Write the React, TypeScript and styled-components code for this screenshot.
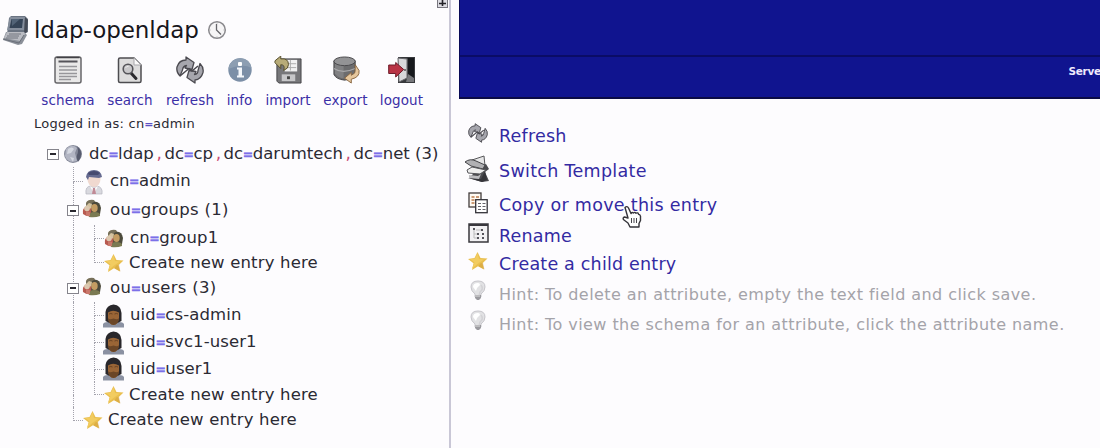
import React from "react";
import styled, { createGlobalStyle } from "styled-components";

const GlobalStyle = createGlobalStyle`
  body { margin: 0; background: #fdfcfe; }
  * { box-sizing: border-box; }
`;

const Page = styled.div`
  display: flex;
  width: 1100px;
  height: 448px;
  overflow: hidden;
  background: #fdfcfe;
  font-family: "DejaVu Sans", Verdana, sans-serif;
  color: #2b2a33;
  white-space: nowrap;
`;

const Sidebar = styled.aside`
  position: relative;
  width: 451px;
  height: 448px;
  flex: none;
  border-right: 2px solid #c9c7d6;
`;

const ResizeBox = styled.div`
  position: absolute;
  top: -7px;
  right: 1px;
  width: 11px;
  height: 12px;
`;

const ServerTitle = styled.header`
  display: flex;
  align-items: center;
  height: 32px;
  margin-top: 14px;
  padding-left: 2px;
`;

const ServerName = styled.h1`
  margin: 0 0 0 4px;
  font-size: 23px;
  line-height: 32px;
  font-weight: 400;
  letter-spacing: -0.05px;
  color: #17161c;
  width: 173px;
`;

const Toolbar = styled.nav`
  display: flex;
  padding-top: 10px;
  padding-left: 38px;
`;

const Tool = styled.a<{ $w: number }>`
  display: flex;
  flex-direction: column;
  align-items: center;
  width: ${(p) => p.$w}px;
  font-size: 13.5px;
  line-height: 18px;
  letter-spacing: 0.1px;
  color: #3b2fa6;
  svg { margin-bottom: 7px; }
`;

const LoggedIn = styled.p`
  margin: 6px 0 0 34px;
  font-size: 13px;
  line-height: 18px;
  letter-spacing: 0.25px;
`;

const Tree = styled.div`
  margin-top: 7px;
  padding-left: 47px;
`;

const TreeRow = styled.div<{ $h: number }>`
  display: flex;
  align-items: center;
  height: ${(p) => p.$h}px;
`;

const Indent = styled.div`
  width: 26px;
  flex: none;
`;

const Guide = styled.div`
  display: flex;
  flex-direction: column;
  align-self: stretch;
  width: 21px;
  flex: none;
`;

const GuideHalf = styled.div<{ $line: boolean; $branch?: boolean }>`
  flex: 1;
  width: 10px;
  border-left: 1px dotted ${(p) => (p.$line ? "#a3a2ac" : "transparent")};
  border-bottom: ${(p) => (p.$branch ? "1px dotted #a3a2ac" : "0")};
`;

const Toggle = styled.div<{ $ml?: number }>`
  display: flex;
  align-items: center;
  justify-content: center;
  width: 12px;
  height: 11px;
  margin-left: ${(p) => p.$ml ?? 0}px;
  flex: none;
  background: #fff;
  border: 1px solid #85848c;
  &::after {
    content: "";
    width: 6px;
    height: 2px;
    background: #2a2930;
  }
`;

const IconSlot = styled.span<{ $w: number; $ml?: number; $up?: number }>`
  display: flex;
  justify-content: center;
  width: ${(p) => p.$w}px;
  margin-left: ${(p) => p.$ml ?? 0}px;
  margin-bottom: ${(p) => p.$up ?? 0}px;
  flex: none;
`;

const EntryName = styled.span<{ $ml?: number; $ls?: number }>`
  margin-left: ${(p) => p.$ml ?? 0}px;
  font-size: 16.5px;
  line-height: 20px;
  letter-spacing: ${(p) => p.$ls ?? 0.1}px;
`;

const EqualSign = styled.b<{ $small?: boolean }>`
  display: inline-flex;
  justify-content: center;
  width: ${(p) => (p.$small ? 8.5 : 9.5)}px;
  font-size: ${(p) => (p.$small ? 11 : 13)}px;
  letter-spacing: 0;
  color: ${(p) => (p.$small ? "#5d50c4" : "#7c70e8")};
  text-shadow: 0 -1px 0 ${(p) => (p.$small ? "transparent" : "rgba(140, 130, 236, 0.75)")};
`;

const CommaSign = styled.span`
  display: inline-flex;
  justify-content: center;
  width: 10.5px;
  font-size: 17px;
  letter-spacing: 0;
  color: #c94a74;
`;

const Main = styled.main`
  flex: 1;
  min-width: 0;
  padding-left: 8px;
`;

const Banner = styled.div`
  height: 99px;
  overflow: hidden;
  background: #10148f;
  border-left: 1px solid #090b57;
  border-bottom: 2px solid #0b0b45;
`;

const BannerTitle = styled.div`
  height: 57px;
  border-bottom: 2px solid #0a0c66;
`;

const BannerInfo = styled.div`
  padding: 5px 0 0 608.5px;
  font-size: 10.5px;
  line-height: 18px;
  font-weight: 700;
  letter-spacing: -0.3px;
  color: #eeeafc;
`;

const Actions = styled.div`
  padding-top: 19px;
  padding-left: 2px;
`;

const Action = styled.div<{ $h: number; $ls?: number; $hint?: boolean }>`
  position: relative;
  display: flex;
  align-items: center;
  height: ${(p) => p.$h}px;
  font-size: ${(p) => (p.$hint ? 16 : 17.5)}px;
  letter-spacing: ${(p) => p.$ls ?? (p.$hint ? 0.44 : 0.3)}px;
  color: ${(p) => (p.$hint ? "#a4a3a9" : "#332aa2")};
`;

const ActionIcon = styled.span<{ $up?: number }>`
  display: flex;
  justify-content: center;
  width: 34px;
  margin-right: 4px;
  margin-bottom: ${(p) => p.$up ?? 0}px;
  flex: none;
`;

const Pointer = styled.span`
  position: absolute;
  left: 161px;
  top: 17px;
  z-index: 1;
`;

const ComputerIcon = () => (
  <svg width="28" height="31" viewBox="0 0 28 31">
    <path d="M7 3 9 1h14l3 3v13l-4 2H5z" fill="#6b7482" />
    <path d="M8 2h15l-1 13H5z" fill="#858e9c" />
    <path d="M9.500 4h11.500l-1 9H7.500z" fill="#354457" />
    <path d="M10 4h8l-8 7z" fill="#526377" />
    <path d="M23 2l3 3-1 12-3 2z" fill="#444a55" />
    <path d="M4 17h18l3 3-5 9-4 1L1 25z" fill="#8b9099" />
    <path d="M5 17h17l1 2-5 7L2 23z" fill="#b9bbc2" />
    <path d="M7 19h12M5 21h12M4 23h12" stroke="#70757f" />
    <path d="M1 24l16 4 5-8" fill="none" stroke="#6a6f79" />
  </svg>
);

const ClockIcon = () => (
  <svg width="20" height="20" viewBox="0 0 20 20">
    <circle cx="10" cy="10" r="8.300" fill="#f6f5f6" stroke="#8b8a8e" strokeWidth="1.500" />
    <path d="M9.500 4v6l4.500 4.500" fill="none" stroke="#66656a" strokeWidth="1.300" />
    <path d="M10 2.500v1M10 16.500v1M2.500 10h1M16.500 10h1" stroke="#aaa" />
  </svg>
);

const SchemaIcon = () => (
  <svg width="28" height="28" viewBox="0 0 28 28">
    <rect x="1" y="1" width="26" height="26" rx="2" fill="#e9e8e8" stroke="#67666a" strokeWidth="1.500" />
    <path d="M2.500 1.500h23" stroke="#414045" strokeWidth="1.500" />
    <path d="M4.500 5.500h19" stroke="#55545a" strokeWidth="2" />
    <path d="M5 10.500h18M5 14h18M5 17.500h18M5 20.500h18M5 23.500h12" stroke="#97969a" strokeWidth="1.300" />
  </svg>
);

const SearchIcon = () => (
  <svg width="28" height="28" viewBox="0 0 28 28">
    <path d="M4 2h14l7 7v16q0 1.500-1.500 1.500H4q-1.500 0-1.500-1.500V3.500Q2.500 2 4 2z" fill="#dddcdc" stroke="#4d4c50" strokeWidth="1.500" />
    <path d="M18 2v7h7" fill="#fbfafa" stroke="#a8a7ab" />
    <path d="m15 17 5 5.500" stroke="#2b2a2e" strokeWidth="3" strokeLinecap="round" />
    <circle cx="12" cy="13" r="4.800" fill="#c9c8ca" stroke="#555459" strokeWidth="1.600" />
    <path d="M9.500 12q1-2 3-1.500" fill="none" stroke="#eee" />
  </svg>
);

const RefreshIcon = ({ size = 28 }: { size?: number }) => (
  <svg width={size} height={size} viewBox="0 0 28 28">
    <g fill="#a6a6ad" stroke="#4b4a50" strokeWidth="1.300" strokeLinejoin="round">
      <path d="M4 20Q0 16 1 11 3 4 10 4V1l8 5.500-2 7-7-1.500 1.500-2.500Q7 10 6.500 14z" />
      <path d="M24 7.500q4 4 3 9-2 7-8 7.500v3l-8-5.500 2-7 7 1-1.500 3q3.500-.5 3.500-4z" />
      <path d="m4 20 9-7.500 3 2.500 6-5" fill="none" strokeWidth="1.600" />
    </g>
  </svg>
);

const InfoIcon = () => (
  <svg width="28" height="28" viewBox="0 0 28 28">
    <circle cx="14" cy="14" r="11.700" fill="#7c8fa7" />
    <path d="M2.500 13q1-10 12-11 10 1 11 10-8-5-23 1z" fill="#8d9eb2" />
    <rect x="12" y="6" width="4" height="4" rx="1" fill="#fff" />
    <path d="M11 11.500h5v8h2v2h-7v-2h1.500v-6H11z" fill="#f4f7fb" />
  </svg>
);

const ImportIcon = () => (
  <svg width="28" height="28" viewBox="0 0 29 29">
    <path d="M4 3h24v25H5l-2-2V4z" fill="#77777a" stroke="#454448" />
    <rect x="11" y="4" width="13" height="12" fill="#f1f1f1" />
    <path d="M12 8h11M12 12h11M17 4v11" stroke="#aaa" />
    <rect x="8" y="19" width="14" height="7" fill="#c7c7c9" />
    <path d="M13.500 21h3v3h-3z" fill="#444" />
    <path d="M1 5 7 0v3q8-1 8 6 0 4-5 6 2-6-3-6v4L1 7z" fill="#b7ab78" stroke="#57502f" />
  </svg>
);

const ExportIcon = () => (
  <svg width="28" height="28" viewBox="0 0 29 29">
    <path d="M2 5v14q2 5 11 6 9-1 11-6V5z" fill="#6c6c6e" stroke="#434245" />
    <path d="M3 8v10q4 5 9 5V9z" fill="#808082" />
    <ellipse cx="13" cy="5.500" rx="11" ry="4.500" fill="#939395" stroke="#4a494c" />
    <path d="M2 13q9 6 22 0" fill="none" stroke="#a9a9ab" strokeWidth="1.300" />
    <path d="m24 9 4 6q1 7-8 9v4l-7-5 7-6v3q5-2 4-6z" fill="#e6c79d" stroke="#8a6843" />
  </svg>
);

const LogoutIcon = () => (
  <svg width="28" height="28" viewBox="0 0 28 28">
    <path d="M10 1h17v26H10z" fill="#37383c" />
    <path d="M20 2h6v24h-6z" fill="#17191d" />
    <path d="m20 18 6 4v4h-8z" fill="#77787c" />
    <path d="m10 2 9 1v19l-8 4z" fill="#d8d8db" stroke="#67676b" />
    <path d="M16 14h2" stroke="#555" strokeWidth="1.500" />
    <path d="M.700 9h7V6.500l8 7-8 7.500v-3.500h-7z" fill="#b93345" stroke="#6d1c29" />
  </svg>
);

const GlobeIcon = () => (
  <svg width="20" height="20" viewBox="0 0 20 20">
    <circle cx="10" cy="10" r="9" fill="#858999" />
    <path d="M3 5q6-6 11-1l-2 5 2 8Q5 20 2 12z" fill="#b2b5c3" />
    <path d="M5 5q4-3 6 0l-3 4-4 1zM7 13l4 1-1 4z" fill="#d5d8e1" />
    <path d="M14 2q8 7 1 16-2-4-1-7 2-4 0-9z" fill="#565a6d" />
  </svg>
);

const AdminIcon = () => (
  <svg width="20" height="26" viewBox="0 0 20 26">
    <path d="M2 25q-1-8 5-8h6q6 1 5 8z" fill="#d9d9df" stroke="#b5b4bf" strokeWidth=".7" />
    <ellipse cx="10" cy="10" rx="6.500" ry="8" fill="#f0d9d0" />
    <path d="M2 8Q3 1 10 1t8 7l-3 1-10-1-1 3z" fill="#656a90" />
    <path d="M4 4q6-4 12 0l-2 2H5z" fill="#464a70" />
    <path d="m6 17 4 3 4-3-4 8z" fill="#fff" />
    <path d="M9 19h2l1 6H8z" fill="#c08a96" />
  </svg>
);

const GroupIcon = () => (
  <svg width="20" height="19" viewBox="0 0 20 19">
    <path d="M1 15Q0 9 4 8l7 1v8q-6 1.500-10-2z" fill="#b85a50" />
    <circle cx="8" cy="5.500" r="4" fill="#d5c3a0" />
    <path d="M4 4q2-4 8-3l2 3-4 1-3-1-3 3z" fill="#77705a" />
    <circle cx="5" cy="9.500" r="2.800" fill="#dcc8b0" />
    <path d="M10 4q7-4 9 5l-1 6H9z" fill="#4c4a3c" />
    <ellipse cx="12.500" cy="9" rx="3.200" ry="4" fill="#c49c62" />
    <path d="M7 18q0-5 5-5 7 0 6 4-5 2-11 1z" fill="#7b7a52" />
    <path d="m4 12 4 1v4H4z" fill="#c9786b" />
  </svg>
);

const UserIcon = () => (
  <svg width="21" height="24" viewBox="0 0 21 24">
    <path d="M0 23.500V20q1-2 5-2h11q4 0 5 2v3.500z" fill="#8b91a2" />
    <path d="M2.500 17V8q1-7 8-7.500Q18 1 18.500 9v8q-8 5-16 0z" fill="#29272b" />
    <path d="M5 8.500q5-3.500 11 0V14q-1 7-5.500 7T5 14z" fill="#9a6536" />
    <path d="M5 14.500q2 1.500 5.500 0 3.500 1.500 5.500 0-1 6.500-5.500 6.500T5 14.500z" fill="#6b4627" />
    <path d="M6 10q2-1 3.500 0m2 0q2-1 3.500 0" stroke="#6a4324" fill="none" />
  </svg>
);

const StarIcon = () => (
  <svg width="20" height="20" viewBox="0 0 20 20">
    <path d="m9.500 1 3 6 7 .5-5 4.700 1.500 6.300-6-3.300L4 19l1.500-6.800L0 8l6.500-1z" fill="#e9bf4f" />
    <path d="m9.500 2 1.500 6 5 .5-6 4-6 5 2.500-6L2 8l5-.5z" fill="#f2cc60" />
    <path d="m15 12 1.500 6.500-6-3.300 2-3z" fill="#d19d3b" opacity=".5" />
  </svg>
);

const TemplateIcon = () => (
  <svg width="28" height="28" viewBox="0 0 28 28">
    <path d="m7 13 15-4 3 5-4 3 4 9-7 1-13-4 4-4z" fill="#4c4c50" />
    <path d="m8 5 12-4 1 10-10-1z" fill="#e6e6e7" stroke="#58585b" />
    <path d="M1 7q5-4 11-1l9 4-2 4-12-3z" fill="#b0b0b3" stroke="#434347" />
    <path d="m3 15 5-3 14 3-6 4-12-1z" fill="#eee" stroke="#56565a" />
    <path d="m4 23 13 1 4-8 2 9-5 2z" fill="#35353a" />
    <path d="m5 20 9 1 3-2-2 5-10-1z" fill="#bdbdc0" />
  </svg>
);

const CopyIcon = () => (
  <svg width="20" height="22" viewBox="0 0 20 22">
    <rect x="1" y="1" width="12" height="14" fill="#fffaf3" stroke="#423c3b" strokeWidth="1.300" />
    <path d="M3.500 5h3m1.500 0h3M3.500 8h3m1.500 0h3M3.500 11h3" stroke="#bd7c4c" strokeWidth="1.300" />
    <rect x="7.700" y="7.700" width="11.500" height="13" fill="#fff" stroke="#343339" strokeWidth="1.300" />
    <path d="M10 11.500h3m1.500 0h3M10 14.500h3m1.500 0h3M10 17.500h3m1.500 0h3" stroke="#65636b" strokeWidth="1.200" />
  </svg>
);

const RenameIcon = () => (
  <svg width="21" height="20" viewBox="0 0 21 20">
    <rect x="1" y="1" width="19" height="18" fill="#f2f1f3" stroke="#38373d" strokeWidth="1.500" />
    <path d="M1 2h19" stroke="#38373d" strokeWidth="2" />
    <path d="M5 5h2v2H5zM9 10h2v2H9zM13 6h2v2h-2zM14 10h2v2h-2zM9 14h2v2H9zM14 14h2v2h-2z" fill="#55545b" />
    <path d="M6 7v8h3M6 11h3M8 7h5" fill="none" stroke="#bbb" />
  </svg>
);

const BulbIcon = () => (
  <svg width="16" height="21" viewBox="0 0 16 21">
    <path d="M5 14Q1 11 1 7q0-6 7-6t7 6q0 4-4 7v3H5z" fill="#e2e2e4" stroke="#c6c5ca" />
    <path d="M3 7q0-4 5-4 2 0 2 2-3 2-4 6z" fill="#fff" />
    <path d="M11 5q3 4-1 7l-1 4" fill="none" stroke="#d3d2d6" strokeWidth="1.500" />
    <path d="M5 15h6v3l-2 2H7l-2-2z" fill="#9b9a9f" />
    <path d="M5 16h5" stroke="#ddd" />
  </svg>
);

const HandIcon = () => (
  <svg width="20" height="23" viewBox="0 0 20 23">
    <path
      d="M3 2.500Q5 .5 6.500 3L9 8.500q1-1.500 2.500-.5 1.300-1.300 2.500.2 2-1 2.500 1 1.500 0 2 2v4.300l-1.500 3V22H8l-2-4-4-3q-2-2 .5-3l3.500 1z"
      fill="#fff" stroke="#35343a" strokeWidth="1.400" strokeLinejoin="round"
    />
    <path d="M9.500 13v5M12 13v5M14.500 13v5" stroke="#46454b" />
  </svg>
);

const Eq = () => <EqualSign>=</EqualSign>;
const Comma = () => <CommaSign>,</CommaSign>;

const Trunk = ({ kind }: { kind: "through" | "tee" | "end" }) => (
  <Guide>
    <GuideHalf $line $branch={kind !== "through"} />
    <GuideHalf $line={kind !== "end"} />
  </Guide>
);

const tools = [
  { label: "schema", icon: <SchemaIcon />, w: 60 },
  { label: "search", icon: <SearchIcon />, w: 64 },
  { label: "refresh", icon: <RefreshIcon />, w: 56 },
  { label: "info", icon: <InfoIcon />, w: 43 },
  { label: "import", icon: <ImportIcon />, w: 54 },
  { label: "export", icon: <ExportIcon />, w: 61 },
  { label: "logout", icon: <LogoutIcon />, w: 51 },
];

const Leaf = ({ h, attr, value, group }: { h: number; attr: string; value: string; group?: boolean }) => (
  <TreeRow $h={h}>
    <Indent />
    <Trunk kind="through" />
    <Trunk kind="tee" />
    <IconSlot $w={21} $ml={-12}>{group ? <GroupIcon /> : <UserIcon />}</IconSlot>
    <EntryName $ml={6}>{attr}<Eq />{value}</EntryName>
  </TreeRow>
);

const Unit = ({ h, name, count }: { h: number; name: string; count: number }) => (
  <TreeRow $h={h}>
    <Indent />
    <Trunk kind="through" />
    <Toggle $ml={-27} />
    <IconSlot $w={20} $ml={3} $up={4}><GroupIcon /></IconSlot>
    <EntryName $ml={8} $ls={0.3}>ou<Eq />{name} ({count})</EntryName>
  </TreeRow>
);

const NewEntry = ({ h, nested }: { h: number; nested?: boolean }) => (
  <TreeRow $h={h}>
    <Indent />
    {nested && <Trunk kind="through" />}
    <Trunk kind="end" />
    <IconSlot $w={20} $ml={-11}><StarIcon /></IconSlot>
    <EntryName $ml={5} $ls={0.16}>Create new entry here</EntryName>
  </TreeRow>
);

export default function App() {
  return (
    <>
      <GlobalStyle />
      <Page>
        <Sidebar>
          <ResizeBox>
            <svg width="11" height="12" viewBox="0 0 11 12">
              <rect x=".5" y=".5" width="10" height="11" fill="#dddce2" stroke="#77767e" />
              <path d="M2 7.500h7M5.500 3v7" stroke="#222127" strokeWidth="1.600" />
            </svg>
          </ResizeBox>
          <ServerTitle>
            <ComputerIcon />
            <ServerName>ldap-openldap</ServerName>
            <ClockIcon />
          </ServerTitle>
          <Toolbar>
            {tools.map((t) => (
              <Tool key={t.label} $w={t.w}>
                {t.icon}
                {t.label}
              </Tool>
            ))}
          </Toolbar>
          <LoggedIn>Logged in as: cn<EqualSign $small>=</EqualSign>admin</LoggedIn>
          <Tree>
            <TreeRow $h={26}>
              <Toggle />
              <IconSlot $w={20} $ml={4}><GlobeIcon /></IconSlot>
              <EntryName $ml={6} $ls={0.03}>
                dc<Eq />ldap<Comma />dc<Eq />cp<Comma />dc<Eq />darumtech<Comma />dc<Eq />net (3)
              </EntryName>
            </TreeRow>
            <TreeRow $h={29}>
              <Indent />
              <Trunk kind="tee" />
              <IconSlot $w={20} $ml={-10}><AdminIcon /></IconSlot>
              <EntryName $ml={6} $ls={0}>cn<Eq />admin</EntryName>
            </TreeRow>
            <Unit h={29} name="groups" count={1} />
            <Leaf h={26} attr="cn" value="group1" group />
            <NewEntry h={23} nested />
            <Unit h={28} name="users" count={3} />
            <Leaf h={27} attr="uid" value="cs-admin" />
            <Leaf h={27} attr="uid" value="svc1-user1" />
            <Leaf h={26} attr="uid" value="user1" />
            <NewEntry h={25} nested />
            <NewEntry h={26} />
          </Tree>
        </Sidebar>
        <Main>
          <Banner>
            <BannerTitle />
            <BannerInfo>Serve</BannerInfo>
          </Banner>
          <Actions>
            <Action $h={35} $ls={0.2}>
              <ActionIcon $up={6}><RefreshIcon size={20} /></ActionIcon>Refresh
            </Action>
            <Action $h={35}>
              <ActionIcon $up={4}><TemplateIcon /></ActionIcon>Switch Template
            </Action>
            <Action $h={34}>
              <ActionIcon $up={4}><CopyIcon /></ActionIcon>Copy or move this entry
              <Pointer><HandIcon /></Pointer>
            </Action>
            <Action $h={27} $ls={0.2}>
              <ActionIcon $up={6}><RenameIcon /></ActionIcon>Rename
            </Action>
            <Action $h={30} $ls={0.2}>
              <ActionIcon $up={6}><StarIcon /></ActionIcon>Create a child entry
            </Action>
            <Action $h={30} $hint>
              <ActionIcon $up={8}><BulbIcon /></ActionIcon>
              Hint: To delete an attribute, empty the text field and click save.
            </Action>
            <Action $h={30} $hint>
              <ActionIcon $up={8}><BulbIcon /></ActionIcon>
              Hint: To view the schema for an attribute, click the attribute name.
            </Action>
          </Actions>
        </Main>
      </Page>
    </>
  );
}
